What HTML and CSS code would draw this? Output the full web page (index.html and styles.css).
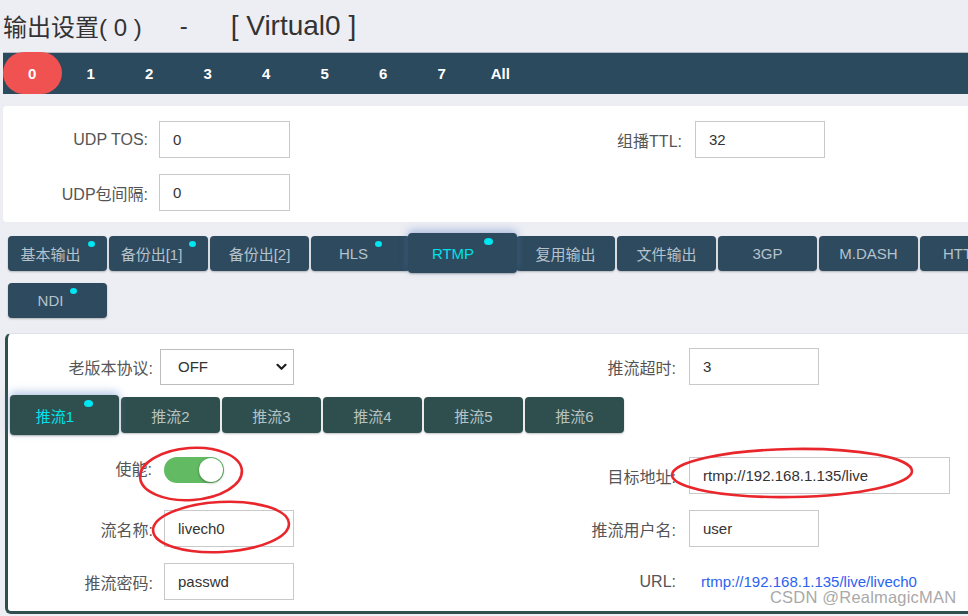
FILE: index.html
```html
<!DOCTYPE html>
<html lang="zh-CN">
<head>
<meta charset="utf-8">
<title>输出设置</title>
<link rel="stylesheet" href="styles.css">
</head>
<body>
<div class="page">
  <h1 class="title"><span class="cn">输出设置( 0 )</span><span class="dash">-</span><span class="dev">[ Virtual0 ]</span></h1>

  <nav class="chan-nav">
    <a class="chan active">0</a>
    <a class="chan">1</a>
    <a class="chan">2</a>
    <a class="chan">3</a>
    <a class="chan">4</a>
    <a class="chan">5</a>
    <a class="chan">6</a>
    <a class="chan">7</a>
    <a class="chan">All</a>
  </nav>

  <section class="panel form-top">
    <label class="lbl">UDP TOS:</label>
    <div class="ctl"><input class="inp" value="0" readonly></div>
    <label class="lbl lbl-r">组播TTL:</label>
    <div class="ctl"><input class="inp w130" value="32" readonly></div>
    <label class="lbl">UDP包间隔:</label>
    <div class="ctl"><input class="inp" value="0" readonly></div>
  </section>

  <div class="tabs">
    <div class="tab"><span>基本输出</span><i class="dot"></i></div>
    <div class="tab"><span>备份出[1]</span><i class="dot"></i></div>
    <div class="tab"><span>备份出[2]</span></div>
    <div class="tab"><span>HLS</span><i class="dot"></i></div>
    <div class="tab active"><span>RTMP</span><i class="dot"></i></div>
    <div class="tab"><span>复用输出</span></div>
    <div class="tab"><span>文件输出</span></div>
    <div class="tab"><span>3GP</span></div>
    <div class="tab"><span>M.DASH</span></div>
    <div class="tab"><span>HTTP</span><i class="dot"></i></div>
    <div class="tab"><span>NDI</span><i class="dot"></i></div>
  </div>

  <section class="card">
    <div class="form-card">
      <label class="lbl">老版本协议:</label>
      <div class="ctl">
        <div class="select"><span>OFF</span>
          <svg class="chev" width="11" height="8" viewBox="0 0 11 8"><path d="M1.5 1.8 L5.5 5.8 L9.5 1.8" fill="none" stroke="#1e1e1e" stroke-width="2.2" stroke-linecap="round" stroke-linejoin="round"/></svg>
        </div>
      </div>
      <label class="lbl lbl-r">推流超时:</label>
      <div class="ctl"><input class="inp w130" value="3" readonly></div>

      <div class="subtabs">
        <div class="stab active"><span>推流1</span><i class="dot"></i></div>
        <div class="stab"><span>推流2</span></div>
        <div class="stab"><span>推流3</span></div>
        <div class="stab"><span>推流4</span></div>
        <div class="stab"><span>推流5</span></div>
        <div class="stab"><span>推流6</span></div>
      </div>

      <label class="lbl top">使能:</label>
      <div class="ctl top"><div class="switch"><span class="knob"></span></div></div>
      <label class="lbl lbl-r">目标地址:</label>
      <div class="ctl"><input class="inp wide" value="rtmp://192.168.1.135/live" readonly></div>

      <label class="lbl">流名称:</label>
      <div class="ctl"><input class="inp w130" value="livech0" readonly></div>
      <label class="lbl lbl-r">推流用户名:</label>
      <div class="ctl"><input class="inp w130" value="user" readonly></div>

      <label class="lbl">推流密码:</label>
      <div class="ctl"><input class="inp w130" value="passwd" readonly></div>
      <label class="lbl lbl-r">URL:</label>
      <div class="ctl"><a class="url">rtmp://192.168.1.135/live/livech0</a></div>
    </div>
  </section>

  <div class="watermark">CSDN @RealmagicMAN</div>

  <svg class="marks" width="968" height="616" viewBox="0 0 968 616">
    <ellipse cx="191" cy="474" rx="51" ry="26" transform="rotate(-4 191 474)" />
    <ellipse cx="221" cy="527" rx="68" ry="25" transform="rotate(-3 221 527)" />
    <ellipse cx="792" cy="473" rx="120" ry="24" transform="rotate(-1 792 473)" />
  </svg>
</div>
</body>
</html>
```
FILE: styles.css
```css
html, body {
  margin: 0;
  padding: 0;
}

body {
  background: #edeef3;
  font-family: "Liberation Sans", "Noto Sans CJK SC", sans-serif;
  color: #333;
  overflow: hidden;
}

.page {
  position: relative;
  width: 1160px;
  height: 616px;
  padding-left: 3px;
}

/* title */
.title {
  margin: 0;
  height: 51px;
  display: flex;
  align-items: center;
  font-weight: normal;
  color: #333;
  white-space: pre;
}
.title .cn { font-size: 24px; }
.title .dash { font-size: 24px; margin-left: 38px; }
.title .dev { font-size: 28px; margin-left: 43px; }

/* channel nav */
.chan-nav {
  display: flex;
  height: 41px;
  margin-top: 1px;
  background: #2c4a5d;
  border-top: 1px solid #b6bdc9;
}
.chan {
  width: 58.5px;
  display: flex;
  align-items: center;
  justify-content: center;
  color: #fff;
  font-weight: bold;
  font-size: 15px;
}
.chan.active {
  background: #f05252;
  border-radius: 21px;
  margin-top: -1px;
}

/* forms */
.panel {
  margin-top: 12px;
  background: #fff;
  border-radius: 4px;
  padding: 15px 0 11px;
}
.form-top,
.form-card {
  display: grid;
  row-gap: 16px;
  align-items: center;
}
.form-top { grid-template-columns: 156px 320px 216px 1fr; }
.form-card { grid-template-columns: 156px 310px 215px 1fr; }

.lbl {
  text-align: right;
  padding-right: 11px;
  font-size: 16px;
  color: #555;
}
.lbl-r { padding-right: 13px; }
.lbl.top { align-self: start; line-height: 26px; padding-right: 12px; }
.ctl.top { align-self: start; }

.inp {
  display: block;
  box-sizing: border-box;
  width: 131px;
  height: 37px;
  border: 1px solid #c9c9c9;
  padding: 0 13px;
  font: 15px "Liberation Sans", "Noto Sans CJK SC", sans-serif;
  color: #333;
  background: #fff;
  outline: none;
}
.inp.w130 { width: 130px; }
.inp.wide { width: 261px; }

/* output tabs */
.tabs {
  display: flex;
  flex-wrap: wrap;
  gap: 12px 2px;
  width: 1060px;
  padding-left: 5px;
  margin-top: 14px;
}
.tab, .stab {
  position: relative;
  box-sizing: border-box;
  width: 99px;
  height: 35px;
  border-radius: 4px;
  display: flex;
  align-items: center;
  justify-content: center;
  font-size: 15px;
  box-shadow: 0 1px 2px rgba(0, 0, 0, 0.25);
}
.tab {
  background: #2d4a5e;
  color: #b6c2cc;
}
.tab.active {
  width: 109px;
  height: 40px;
  margin: -3px -3px -2px -4px;
  color: #00e0ea;
  z-index: 1;
  box-shadow: 0 -3px 8px rgba(90, 130, 200, 0.45), 0 1px 2px rgba(0, 0, 0, 0.3);
}
.dot {
  display: block;
  align-self: flex-start;
  width: 7px;
  height: 6px;
  margin: 5px 0 0 7px;
  border-radius: 50%;
  background: #00e6f2;
}
.active .dot { width: 9px; height: 7px; margin-left: 10px; }

/* card */
.card {
  margin: 15px 0 0 2px;
  background: #fff;
  border: 1px solid #dfe2e8;
  border-left: 3px solid #2f4f4f;
  border-bottom: 3px solid #2f4f4f;
  border-radius: 6px;
  padding: 14px 0 11px;
}

.select {
  box-sizing: border-box;
  width: 134px;
  height: 36px;
  border: 1px solid #bdbdbd;
  display: flex;
  align-items: center;
  justify-content: space-between;
  padding: 0 6px 0 17px;
  font-size: 15px;
  color: #333;
  margin-left: -4px;
}

.subtabs {
  grid-column: 1 / -1;
  display: flex;
  gap: 2px;
  margin: -4px 0 8px 2px;
}
.stab {
  height: 36px;
  background: #2f4f4f;
  color: #b6c3c3;
}
.stab.active {
  width: 109px;
  height: 40px;
  margin: -2px 0;
  color: #00e2ec;
  z-index: 1;
  box-shadow: 0 -3px 8px rgba(90, 130, 200, 0.45), 0 1px 2px rgba(0, 0, 0, 0.3);
}

.switch {
  box-sizing: border-box;
  width: 60px;
  height: 26px;
  border-radius: 13px;
  background: #62bb62;
  display: flex;
  justify-content: flex-end;
  align-items: center;
  padding: 1px;
}
.knob {
  width: 24px;
  height: 24px;
  border-radius: 50%;
  background: #fff;
  box-shadow: 0 1px 3px rgba(0, 0, 0, 0.35);
}

.url {
  display: block;
  padding-left: 12px;
  font-size: 15px;
  color: #2b62f2;
}

.watermark {
  position: absolute;
  left: 770px;
  top: 588px;
  font-size: 16.5px;
  color: #a9a9a9;
  letter-spacing: 0.2px;
}

.marks {
  position: absolute;
  left: 0;
  top: 0;
  pointer-events: none;
}
.marks ellipse {
  fill: none;
  stroke: #e8262b;
  stroke-width: 2.6;
}
```
